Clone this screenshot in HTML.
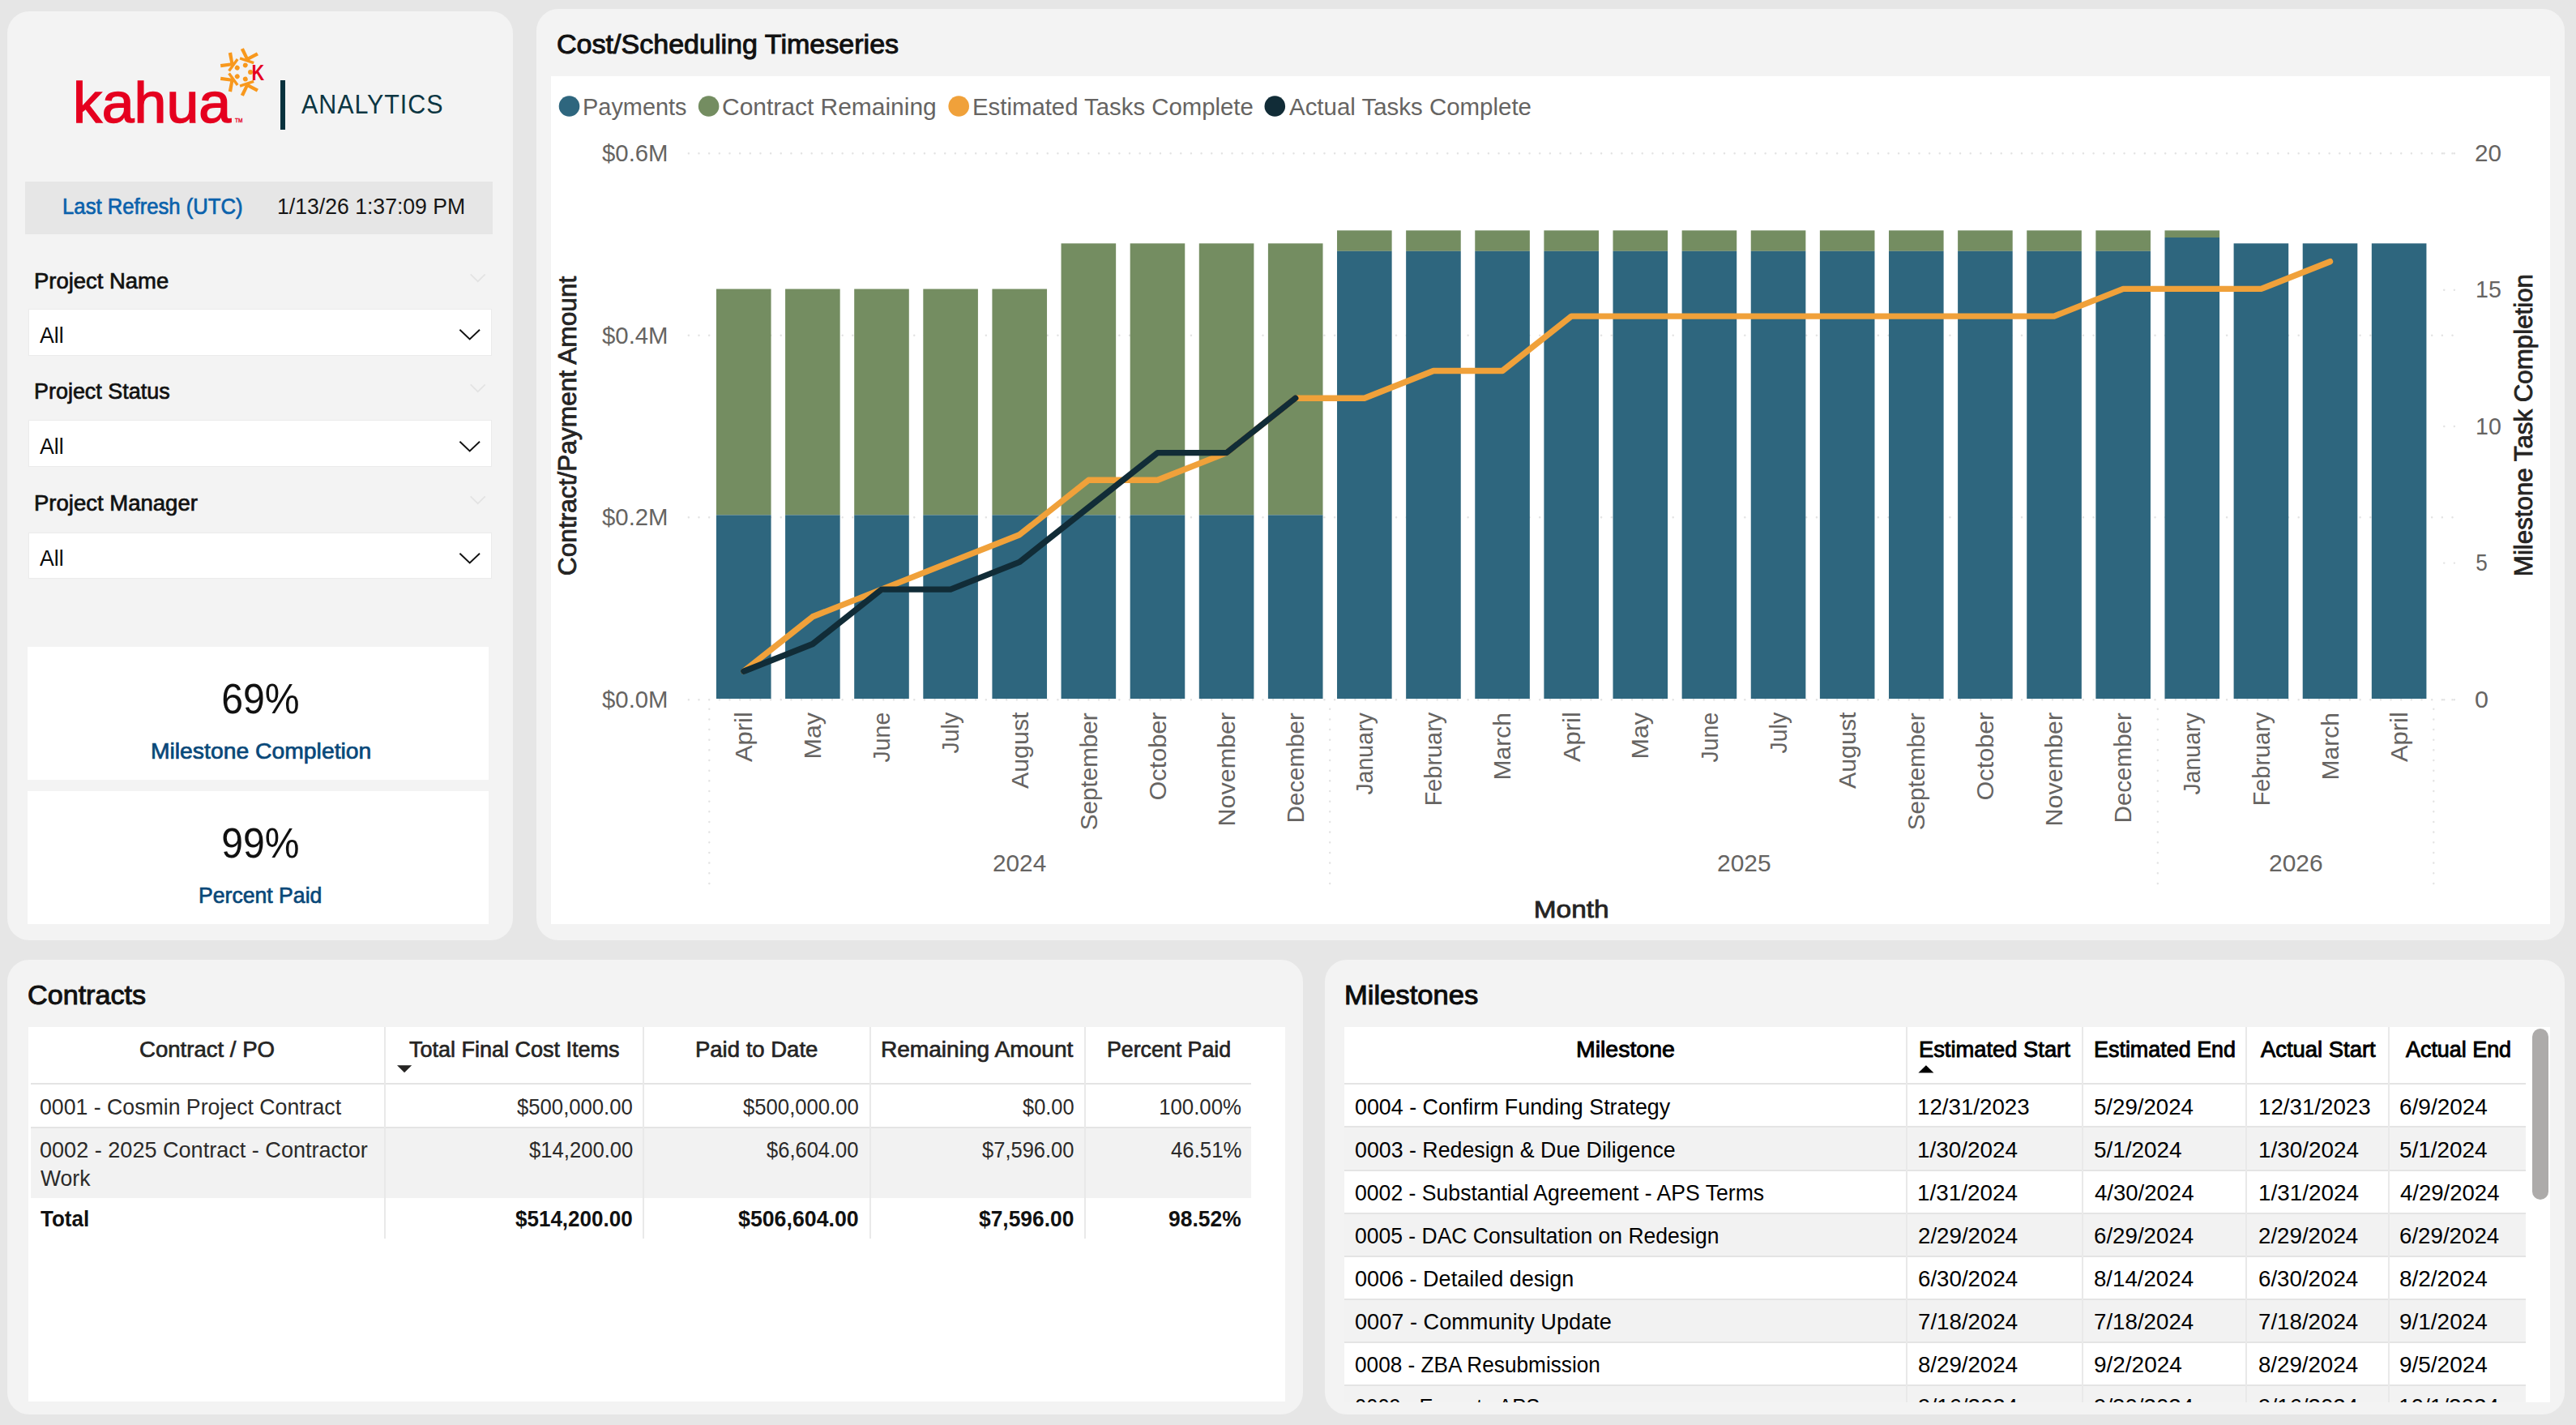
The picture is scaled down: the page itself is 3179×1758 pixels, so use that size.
<!DOCTYPE html>
<html lang="en"><head><meta charset="utf-8"><title>Kahua Analytics - Cost/Scheduling</title>
<style>
html,body{margin:0;padding:0}
body{width:3179px;height:1758px;background:#e6e6e6;position:relative;overflow:hidden;font-family:"Liberation Sans",sans-serif;}
body>div,body>svg,.t{position:absolute}
.t{white-space:pre;line-height:1;display:block}
.clip{position:absolute;overflow:hidden}
.clip>div,.clip>.t{position:absolute}
</style></head>
<body>
<div style="left:9px;top:13.5px;width:624px;height:1146.5px;background:#f3f3f3;border-radius:27px;"></div>
<div style="left:661.7px;top:10.5px;width:2503.3px;height:1149.5px;background:#f3f3f3;border-radius:27px;"></div>
<div style="left:9px;top:1184px;width:1598.5px;height:561px;background:#f3f3f3;border-radius:27px;"></div>
<div style="left:1635px;top:1184px;width:1529.6px;height:561px;background:#f3f3f3;border-radius:27px;"></div>
<div style="left:679.5px;top:94.3px;width:2467.9px;height:1045.4px;background:#fff;"></div>
<div style="left:34.6px;top:1267.3px;width:1551.9px;height:462.1px;background:#fff;"></div>
<div style="left:1658.8px;top:1267.3px;width:1488px;height:462.3px;background:#fff;"></div>
<div style="left:31px;top:223.7px;width:577px;height:65px;background:#e6e6e6;"></div>
<span class="t" style="left:76.74px;top:242.00px;font-size:27px;color:#0b62ac;-webkit-text-stroke:0.7px #0b62ac;transform-origin:1.86px 22.00px;transform:scaleX(0.9503);">Last Refresh (UTC)</span>
<span class="t" style="left:342.31px;top:241.00px;font-size:27.5px;color:#161616;transform-origin:2.09px 23.00px;transform:scaleX(0.9669);">1/13/26 1:37:09 PM</span>
<span class="t" style="left:42.04px;top:334.00px;font-size:27px;color:#111;-webkit-text-stroke:0.7px #111;transform-origin:1.86px 22.00px;transform:scaleX(1.0165);">Project Name</span>
<svg style="left:578px;top:334.6px" width="24" height="16" viewBox="0 0 24 16"><path d="M2.7 3.3 L11.7 12.2 L20.7 3.3" fill="none" stroke="#e3e3e3" stroke-width="1.7"/></svg>
<div style="left:34.8px;top:381.3px;width:572.7px;height:58px;background:#fff;box-sizing:border-box;border:1.8px solid #ebebeb;"></div>
<span class="t" style="left:49.15px;top:401.00px;font-size:27px;color:#0a0a0a;transform-origin:0.05px 22.00px;transform:scaleX(0.9873);">All</span>
<svg style="left:564px;top:403.4px" width="32" height="20" viewBox="0 0 32 20"><path d="M3.4 3.7 L15.7 15.5 L28 3.7" fill="none" stroke="#111" stroke-width="1.9"/></svg>
<span class="t" style="left:42.04px;top:470.00px;font-size:27px;color:#111;-webkit-text-stroke:0.7px #111;transform-origin:1.86px 22.00px;transform:scaleX(0.9971);">Project Status</span>
<svg style="left:578px;top:470.7px" width="24" height="16" viewBox="0 0 24 16"><path d="M2.7 3.3 L11.7 12.2 L20.7 3.3" fill="none" stroke="#e3e3e3" stroke-width="1.7"/></svg>
<div style="left:34.8px;top:518.4px;width:572.7px;height:57.4px;background:#fff;box-sizing:border-box;border:1.8px solid #ebebeb;"></div>
<span class="t" style="left:49.15px;top:538.00px;font-size:27px;color:#0a0a0a;transform-origin:0.05px 22.00px;transform:scaleX(0.9873);">All</span>
<svg style="left:564px;top:540.5px" width="32" height="20" viewBox="0 0 32 20"><path d="M3.4 3.7 L15.7 15.5 L28 3.7" fill="none" stroke="#111" stroke-width="1.9"/></svg>
<span class="t" style="left:42.04px;top:608.00px;font-size:27px;color:#111;-webkit-text-stroke:0.7px #111;transform-origin:1.86px 22.00px;transform:scaleX(1.0191);">Project Manager</span>
<svg style="left:578px;top:609.1px" width="24" height="16" viewBox="0 0 24 16"><path d="M2.7 3.3 L11.7 12.2 L20.7 3.3" fill="none" stroke="#e3e3e3" stroke-width="1.7"/></svg>
<div style="left:34.8px;top:656.6px;width:572.7px;height:57.1px;background:#fff;box-sizing:border-box;border:1.8px solid #ebebeb;"></div>
<span class="t" style="left:49.15px;top:676.00px;font-size:27px;color:#0a0a0a;transform-origin:0.05px 22.00px;transform:scaleX(0.9873);">All</span>
<svg style="left:564px;top:678.7px" width="32" height="20" viewBox="0 0 32 20"><path d="M3.4 3.7 L15.7 15.5 L28 3.7" fill="none" stroke="#111" stroke-width="1.9"/></svg>
<div style="left:34px;top:798.2px;width:569px;height:163.4px;background:#fff;"></div>
<div style="left:34px;top:976px;width:569px;height:163.8px;background:#fff;"></div>
<span class="t" style="left:273.08px;top:836.00px;font-size:52.5px;color:#111;transform-origin:2.67px 44.00px;transform:scaleX(0.9180);">69%</span>
<span class="t" style="left:185.54px;top:914.00px;font-size:27px;color:#084879;-webkit-text-stroke:0.7px #084879;transform-origin:1.86px 22.00px;transform:scaleX(1.0493);">Milestone Completion</span>
<span class="t" style="left:273.29px;top:1014.00px;font-size:52.5px;color:#111;transform-origin:2.46px 44.00px;transform:scaleX(0.9162);">99%</span>
<span class="t" style="left:245.29px;top:1092.00px;font-size:27px;color:#084879;-webkit-text-stroke:0.7px #084879;transform-origin:1.86px 22.00px;transform:scaleX(0.9852);">Percent Paid</span>
<span class="t" style="left:90.07px;top:93.00px;font-size:69.5px;color:#e5001f;-webkit-text-stroke:1.5px #e5001f;transform-origin:3.93px 58.00px;transform:scaleX(1.0312);">kahua</span>
<span class="t" style="left:290.20px;top:146.00px;font-size:6.8px;color:#e5001f;-webkit-text-stroke:0.3px #e5001f;transform-origin:0.00px 5.00px;transform:scaleX(0.9557);">TM</span>
<div style="left:345.9px;top:98.9px;width:5.7px;height:61.5px;background:#07313d;"></div>
<span class="t" style="left:372.44px;top:113.00px;font-size:32.5px;color:#0c3642;letter-spacing:1px;transform-origin:0.06px 27.00px;transform:scaleX(0.9369);">ANALYTICS</span>
<svg style="left:259.5px;top:49px" width="80" height="80" viewBox="-40 -40 80 80"><g fill="#f8981d"><circle cx="9" cy="0" r="2.95"/><g transform="rotate(-72)"><circle cx="9" cy="0" r="2.95"/><rect x="13.3" y="-9" width="3.4" height="18"/><path d="M15.6 -1.7 L25.6 -11.6 L28.6 -8.4 L19.6 0 L28.6 8.4 L25.6 11.6 L15.6 1.7Z"/></g><g transform="rotate(-144)"><circle cx="9" cy="0" r="2.95"/><rect x="13.3" y="-9" width="3.4" height="18"/><path d="M15.6 -1.7 L25.6 -11.6 L28.6 -8.4 L19.6 0 L28.6 8.4 L25.6 11.6 L15.6 1.7Z"/></g><g transform="rotate(144)"><circle cx="9" cy="0" r="2.95"/><rect x="13.3" y="-9" width="3.4" height="18"/><path d="M15.6 -1.7 L25.6 -11.6 L28.6 -8.4 L19.6 0 L28.6 8.4 L25.6 11.6 L15.6 1.7Z"/></g><g transform="rotate(72)"><circle cx="9" cy="0" r="2.95"/><rect x="13.3" y="-9" width="3.4" height="18"/><path d="M15.6 -1.7 L25.6 -11.6 L28.6 -8.4 L19.6 0 L28.6 8.4 L25.6 11.6 L15.6 1.7Z"/></g></g></svg>
<span class="t" style="left:310.47px;top:76.00px;font-size:27.3px;color:#e5001f;font-weight:700;transform-origin:1.83px 23.00px;transform:scaleX(0.7937);">K</span>
<svg style="left:0;top:0" width="3179" height="1170" viewBox="0 0 3179 1170"><g stroke="#e3e3e3" stroke-width="2.4" stroke-linecap="round" stroke-dasharray="0.1 12.555" fill="none"><line x1="849.8" y1="189.2" x2="3027.5" y2="189.2"/><line x1="849.8" y1="413.8" x2="3027.5" y2="413.8"/><line x1="849.8" y1="638.3" x2="3027.5" y2="638.3"/><line x1="849.8" y1="863.3" x2="3027.5" y2="863.3"/><line x1="3016.2" y1="189.2" x2="3030" y2="189.2"/><line x1="3016.2" y1="357.7" x2="3030" y2="357.7"/><line x1="3016.2" y1="526" x2="3030" y2="526"/><line x1="3016.2" y1="694.6" x2="3030" y2="694.6"/><line x1="3016.2" y1="863.3" x2="3030" y2="863.3"/><line x1="875.3" y1="874.7" x2="875.3" y2="1091"/><line x1="1641.2" y1="874.7" x2="1641.2" y2="1091"/><line x1="2662.8" y1="874.7" x2="2662.8" y2="1091"/><line x1="3003.3" y1="874.7" x2="3003.3" y2="1091"/></g><rect x="883.95" y="356.5" width="67.6" height="278.9" fill="#748d61"/><rect x="883.95" y="635.4" width="67.6" height="226.6" fill="#2e667e"/><rect x="969.07" y="356.5" width="67.6" height="278.9" fill="#748d61"/><rect x="969.07" y="635.4" width="67.6" height="226.6" fill="#2e667e"/><rect x="1054.19" y="356.5" width="67.6" height="278.9" fill="#748d61"/><rect x="1054.19" y="635.4" width="67.6" height="226.6" fill="#2e667e"/><rect x="1139.31" y="356.5" width="67.6" height="278.9" fill="#748d61"/><rect x="1139.31" y="635.4" width="67.6" height="226.6" fill="#2e667e"/><rect x="1224.43" y="356.5" width="67.6" height="278.9" fill="#748d61"/><rect x="1224.43" y="635.4" width="67.6" height="226.6" fill="#2e667e"/><rect x="1309.55" y="300.3" width="67.6" height="335.1" fill="#748d61"/><rect x="1309.55" y="635.4" width="67.6" height="226.6" fill="#2e667e"/><rect x="1394.67" y="300.3" width="67.6" height="335.1" fill="#748d61"/><rect x="1394.67" y="635.4" width="67.6" height="226.6" fill="#2e667e"/><rect x="1479.79" y="300.3" width="67.6" height="335.1" fill="#748d61"/><rect x="1479.79" y="635.4" width="67.6" height="226.6" fill="#2e667e"/><rect x="1564.91" y="300.3" width="67.6" height="335.1" fill="#748d61"/><rect x="1564.91" y="635.4" width="67.6" height="226.6" fill="#2e667e"/><rect x="1650.03" y="284.3" width="67.6" height="25.5" fill="#748d61"/><rect x="1650.03" y="309.8" width="67.6" height="552.2" fill="#2e667e"/><rect x="1735.15" y="284.3" width="67.6" height="25.5" fill="#748d61"/><rect x="1735.15" y="309.8" width="67.6" height="552.2" fill="#2e667e"/><rect x="1820.27" y="284.3" width="67.6" height="25.5" fill="#748d61"/><rect x="1820.27" y="309.8" width="67.6" height="552.2" fill="#2e667e"/><rect x="1905.39" y="284.3" width="67.6" height="25.5" fill="#748d61"/><rect x="1905.39" y="309.8" width="67.6" height="552.2" fill="#2e667e"/><rect x="1990.51" y="284.3" width="67.6" height="25.5" fill="#748d61"/><rect x="1990.51" y="309.8" width="67.6" height="552.2" fill="#2e667e"/><rect x="2075.63" y="284.3" width="67.6" height="25.5" fill="#748d61"/><rect x="2075.63" y="309.8" width="67.6" height="552.2" fill="#2e667e"/><rect x="2160.75" y="284.3" width="67.6" height="25.5" fill="#748d61"/><rect x="2160.75" y="309.8" width="67.6" height="552.2" fill="#2e667e"/><rect x="2245.87" y="284.3" width="67.6" height="25.5" fill="#748d61"/><rect x="2245.87" y="309.8" width="67.6" height="552.2" fill="#2e667e"/><rect x="2330.99" y="284.3" width="67.6" height="25.5" fill="#748d61"/><rect x="2330.99" y="309.8" width="67.6" height="552.2" fill="#2e667e"/><rect x="2416.11" y="284.3" width="67.6" height="25.5" fill="#748d61"/><rect x="2416.11" y="309.8" width="67.6" height="552.2" fill="#2e667e"/><rect x="2501.23" y="284.3" width="67.6" height="25.5" fill="#748d61"/><rect x="2501.23" y="309.8" width="67.6" height="552.2" fill="#2e667e"/><rect x="2586.35" y="284.3" width="67.6" height="25.5" fill="#748d61"/><rect x="2586.35" y="309.8" width="67.6" height="552.2" fill="#2e667e"/><rect x="2671.47" y="284.3" width="67.6" height="8.7" fill="#748d61"/><rect x="2671.47" y="293" width="67.6" height="569" fill="#2e667e"/><rect x="2756.59" y="300.3" width="67.6" height="561.7" fill="#2e667e"/><rect x="2841.71" y="300.3" width="67.6" height="561.7" fill="#2e667e"/><rect x="2926.83" y="300.3" width="67.6" height="561.7" fill="#2e667e"/><polyline points="917.8,828.2 1002.9,760.8 1088.0,727.1 1173.1,693.4 1258.2,659.7 1343.3,592.3 1428.5,592.3 1513.6,558.6 1598.7,491.2 1683.8,491.2 1769.0,457.5 1854.1,457.5 1939.2,390.1 2024.3,390.1 2109.4,390.1 2194.6,390.1 2279.7,390.1 2364.8,390.1 2449.9,390.1 2535.0,390.1 2620.2,356.4 2705.3,356.4 2790.4,356.4 2875.5,322.7" fill="none" stroke="#f0a13a" stroke-width="7.4" stroke-linecap="round" stroke-linejoin="round"/><polyline points="917.8,828.2 1002.9,794.5 1088.0,727.1 1173.1,727.1 1258.2,693.4 1343.3,626.0 1428.5,558.6 1513.6,558.6 1598.7,491.2" fill="none" stroke="#112c37" stroke-width="7.4" stroke-linecap="round" stroke-linejoin="round"/><circle cx="702.5" cy="131" r="12.8" fill="#2e667e"/><circle cx="874.6" cy="131" r="12.8" fill="#748d61"/><circle cx="1183.2" cy="131" r="12.8" fill="#f0a13a"/><circle cx="1573.3" cy="131" r="12.8" fill="#112c37"/></svg>
<span class="t" style="left:686.98px;top:38.00px;font-size:33.8px;color:#111;-webkit-text-stroke:1px #111;transform-origin:1.22px 28.00px;transform:scaleX(1.0077);">Cost/Scheduling Timeseries</span>
<span class="t" style="left:718.86px;top:117.00px;font-size:29.8px;color:#666462;transform-origin:2.44px 25.00px;transform:scaleX(0.9692);">Payments</span>
<span class="t" style="left:891.39px;top:117.00px;font-size:29.8px;color:#666462;transform-origin:1.51px 25.00px;transform:scaleX(1.0054);">Contract Remaining</span>
<span class="t" style="left:1200.06px;top:117.00px;font-size:29.8px;color:#666462;transform-origin:2.44px 25.00px;transform:scaleX(0.9847);">Estimated Tasks Complete</span>
<span class="t" style="left:1591.34px;top:117.00px;font-size:29.8px;color:#666462;transform-origin:0.06px 25.00px;transform:scaleX(0.9882);">Actual Tasks Complete</span>
<span class="t" style="left:743.18px;top:174.00px;font-size:30px;color:#666462;transform-origin:0.32px 25.00px;transform:scaleX(0.9776);">$0.6M</span>
<span class="t" style="left:743.18px;top:399.00px;font-size:30px;color:#666462;transform-origin:0.32px 25.00px;transform:scaleX(0.9776);">$0.4M</span>
<span class="t" style="left:743.18px;top:623.00px;font-size:30px;color:#666462;transform-origin:0.32px 25.00px;transform:scaleX(0.9776);">$0.2M</span>
<span class="t" style="left:743.18px;top:848.00px;font-size:30px;color:#666462;transform-origin:0.32px 25.00px;transform:scaleX(0.9776);">$0.0M</span>
<span class="t" style="left:3054.19px;top:174.00px;font-size:30px;color:#666462;transform-origin:1.51px 25.00px;transform:scaleX(0.9904);">20</span>
<span class="t" style="left:3054.71px;top:342.00px;font-size:30px;color:#666462;transform-origin:2.29px 25.00px;transform:scaleX(0.9554);">15</span>
<span class="t" style="left:3054.81px;top:511.00px;font-size:30px;color:#666462;transform-origin:2.29px 25.00px;transform:scaleX(0.9526);">10</span>
<span class="t" style="left:3055.10px;top:679.00px;font-size:30px;color:#666462;transform-origin:1.20px 25.00px;transform:scaleX(0.8716);">5</span>
<span class="t" style="left:3054.23px;top:848.00px;font-size:30px;color:#666462;transform-origin:1.17px 25.00px;transform:scaleX(1.0179);">0</span>
<span class="t" style="left:928.29px;top:915.40px;font-size:30.2px;color:#666462;transform-origin:0.06px 25.00px;transform:rotate(-90deg) scaleX(1.0255);">April</span>
<span class="t" style="left:1010.99px;top:908.80px;font-size:30.2px;color:#666462;transform-origin:2.48px 25.00px;transform:rotate(-90deg) scaleX(1.0093);">May</span>
<span class="t" style="left:1098.12px;top:914.60px;font-size:30.2px;color:#666462;transform-origin:0.47px 25.00px;transform:rotate(-90deg) scaleX(0.9426);">June</span>
<span class="t" style="left:1183.24px;top:903.90px;font-size:30.2px;color:#666462;transform-origin:0.47px 25.00px;transform:rotate(-90deg) scaleX(0.9425);">July</span>
<span class="t" style="left:1268.77px;top:948.10px;font-size:30.2px;color:#666462;transform-origin:0.06px 25.00px;transform:rotate(-90deg) scaleX(1.0064);">August</span>
<span class="t" style="left:1352.58px;top:997.60px;font-size:30.2px;color:#666462;transform-origin:1.37px 25.00px;transform:rotate(-90deg) scaleX(0.9822);">September</span>
<span class="t" style="left:1437.64px;top:961.30px;font-size:30.2px;color:#666462;transform-origin:1.43px 25.00px;transform:rotate(-90deg) scaleX(1.0137);">October</span>
<span class="t" style="left:1521.71px;top:992.00px;font-size:30.2px;color:#666462;transform-origin:2.48px 25.00px;transform:rotate(-90deg) scaleX(1.0098);">November</span>
<span class="t" style="left:1606.83px;top:987.80px;font-size:30.2px;color:#666462;transform-origin:2.48px 25.00px;transform:rotate(-90deg) scaleX(0.9789);">December</span>
<span class="t" style="left:1693.96px;top:954.50px;font-size:30.2px;color:#666462;transform-origin:0.47px 25.00px;transform:rotate(-90deg) scaleX(0.9413);">January</span>
<span class="t" style="left:1777.07px;top:967.10px;font-size:30.2px;color:#666462;transform-origin:2.48px 25.00px;transform:rotate(-90deg) scaleX(0.9572);">February</span>
<span class="t" style="left:1862.19px;top:934.80px;font-size:30.2px;color:#666462;transform-origin:2.48px 25.00px;transform:rotate(-90deg) scaleX(0.9945);">March</span>
<span class="t" style="left:1949.73px;top:915.40px;font-size:30.2px;color:#666462;transform-origin:0.06px 25.00px;transform:rotate(-90deg) scaleX(1.0255);">April</span>
<span class="t" style="left:2032.43px;top:908.80px;font-size:30.2px;color:#666462;transform-origin:2.48px 25.00px;transform:rotate(-90deg) scaleX(1.0093);">May</span>
<span class="t" style="left:2119.56px;top:914.60px;font-size:30.2px;color:#666462;transform-origin:0.47px 25.00px;transform:rotate(-90deg) scaleX(0.9426);">June</span>
<span class="t" style="left:2204.68px;top:903.90px;font-size:30.2px;color:#666462;transform-origin:0.47px 25.00px;transform:rotate(-90deg) scaleX(0.9425);">July</span>
<span class="t" style="left:2290.21px;top:948.10px;font-size:30.2px;color:#666462;transform-origin:0.06px 25.00px;transform:rotate(-90deg) scaleX(1.0064);">August</span>
<span class="t" style="left:2374.02px;top:997.60px;font-size:30.2px;color:#666462;transform-origin:1.37px 25.00px;transform:rotate(-90deg) scaleX(0.9822);">September</span>
<span class="t" style="left:2459.08px;top:961.30px;font-size:30.2px;color:#666462;transform-origin:1.43px 25.00px;transform:rotate(-90deg) scaleX(1.0137);">October</span>
<span class="t" style="left:2543.15px;top:992.00px;font-size:30.2px;color:#666462;transform-origin:2.48px 25.00px;transform:rotate(-90deg) scaleX(1.0098);">November</span>
<span class="t" style="left:2628.27px;top:987.80px;font-size:30.2px;color:#666462;transform-origin:2.48px 25.00px;transform:rotate(-90deg) scaleX(0.9789);">December</span>
<span class="t" style="left:2715.40px;top:954.50px;font-size:30.2px;color:#666462;transform-origin:0.47px 25.00px;transform:rotate(-90deg) scaleX(0.9413);">January</span>
<span class="t" style="left:2798.51px;top:967.10px;font-size:30.2px;color:#666462;transform-origin:2.48px 25.00px;transform:rotate(-90deg) scaleX(0.9572);">February</span>
<span class="t" style="left:2883.63px;top:934.80px;font-size:30.2px;color:#666462;transform-origin:2.48px 25.00px;transform:rotate(-90deg) scaleX(0.9945);">March</span>
<span class="t" style="left:2971.17px;top:915.40px;font-size:30.2px;color:#666462;transform-origin:0.06px 25.00px;transform:rotate(-90deg) scaleX(1.0255);">April</span>
<span class="t" style="left:1225.09px;top:1050.00px;font-size:30px;color:#666462;transform-origin:1.51px 25.00px;transform:scaleX(0.9913);">2024</span>
<span class="t" style="left:2118.59px;top:1050.00px;font-size:30px;color:#666462;transform-origin:1.51px 25.00px;transform:scaleX(0.9972);">2025</span>
<span class="t" style="left:2799.59px;top:1050.00px;font-size:30px;color:#666462;transform-origin:1.51px 25.00px;transform:scaleX(0.9981);">2026</span>
<span class="t" style="left:1893.28px;top:1107.00px;font-size:29.5px;color:#252423;-webkit-text-stroke:0.8px #252423;transform-origin:2.02px 25.00px;transform:scaleX(1.1330);">Month</span>
<span class="t" style="left:710.05px;top:682.50px;font-size:30.5px;color:#252423;-webkit-text-stroke:0.8px #252423;transform-origin:1.15px 26.00px;transform:rotate(-90deg) scaleX(1.0379);">Contract/Payment Amount</span>
<span class="t" style="left:3122.70px;top:683.40px;font-size:30.5px;color:#252423;-webkit-text-stroke:0.8px #252423;transform-origin:2.10px 26.00px;transform:rotate(-90deg) scaleX(1.0252);">Milestone Task Completion</span>
<span class="t" style="left:34.20px;top:1211.00px;font-size:33.5px;color:#111;-webkit-text-stroke:1px #111;transform-origin:1.20px 28.00px;transform:scaleX(1.0195);">Contracts</span>
<span class="t" style="left:172.26px;top:1282.00px;font-size:26.8px;color:#252423;-webkit-text-stroke:0.65px #252423;transform-origin:1.04px 22.00px;transform:scaleX(1.0291);">Contract / PO</span>
<span class="t" style="left:505.32px;top:1282.00px;font-size:26.8px;color:#252423;-webkit-text-stroke:0.65px #252423;transform-origin:0.28px 22.00px;transform:scaleX(1.0077);">Total Final Cost Items</span>
<span class="t" style="left:857.73px;top:1282.00px;font-size:26.8px;color:#252423;-webkit-text-stroke:0.65px #252423;transform-origin:1.87px 22.00px;transform:scaleX(1.0266);">Paid to Date</span>
<span class="t" style="left:1086.63px;top:1282.00px;font-size:26.8px;color:#252423;-webkit-text-stroke:0.65px #252423;transform-origin:1.87px 22.00px;transform:scaleX(1.0486);">Remaining Amount</span>
<span class="t" style="left:1365.53px;top:1282.00px;font-size:26.8px;color:#252423;-webkit-text-stroke:0.65px #252423;transform-origin:1.87px 22.00px;transform:scaleX(0.9976);">Percent Paid</span>
<svg style="left:488px;top:1312px" width="24" height="14" viewBox="0 0 24 14"><path d="M2 2.2 L20.2 2.2 L11.1 11.2Z" fill="#252423"/></svg>
<div style="left:38px;top:1391.5px;width:1506px;height:86px;background:#f2f2f2;"></div>
<div style="left:38px;top:1336px;width:1506px;height:2px;background:#e4e4e4;"></div>
<div style="left:38px;top:1389.6px;width:1506px;height:2px;background:#e4e4e4;"></div>
<div style="left:473.8px;top:1267.3px;width:2px;height:261px;background:#e9e9e9;"></div>
<div style="left:792.6px;top:1267.3px;width:2px;height:261px;background:#e9e9e9;"></div>
<div style="left:1073px;top:1267.3px;width:2px;height:261px;background:#e9e9e9;"></div>
<div style="left:1338px;top:1267.3px;width:2px;height:261px;background:#e9e9e9;"></div>
<span class="t" style="left:48.93px;top:1352.00px;font-size:27.5px;color:#2b2a29;transform-origin:1.07px 23.00px;transform:scaleX(0.9698);">0001 - Cosmin Project Contract</span>
<span class="t" style="left:638.20px;top:1352.00px;font-size:27.5px;color:#2b2a29;transform-origin:0.30px 23.00px;transform:scaleX(0.9336);">$500,000.00</span>
<span class="t" style="left:917.00px;top:1352.00px;font-size:27.5px;color:#2b2a29;transform-origin:0.30px 23.00px;transform:scaleX(0.9336);">$500,000.00</span>
<span class="t" style="left:1261.90px;top:1352.00px;font-size:27.5px;color:#2b2a29;transform-origin:0.30px 23.00px;transform:scaleX(0.9235);">$0.00</span>
<span class="t" style="left:1430.11px;top:1352.00px;font-size:27.5px;color:#2b2a29;transform-origin:2.09px 23.00px;transform:scaleX(0.9384);">100.00%</span>
<span class="t" style="left:48.93px;top:1405.00px;font-size:27.5px;color:#2b2a29;transform-origin:1.07px 23.00px;transform:scaleX(0.9842);">0002 - 2025 Contract - Contractor</span>
<span class="t" style="left:652.70px;top:1405.00px;font-size:27.5px;color:#2b2a29;transform-origin:0.30px 23.00px;transform:scaleX(0.9320);">$14,200.00</span>
<span class="t" style="left:946.30px;top:1405.00px;font-size:27.5px;color:#2b2a29;transform-origin:0.30px 23.00px;transform:scaleX(0.9275);">$6,604.00</span>
<span class="t" style="left:1212.00px;top:1405.00px;font-size:27.5px;color:#2b2a29;transform-origin:0.30px 23.00px;transform:scaleX(0.9275);">$7,596.00</span>
<span class="t" style="left:1444.77px;top:1405.00px;font-size:27.5px;color:#2b2a29;transform-origin:0.63px 23.00px;transform:scaleX(0.9360);">46.51%</span>
<span class="t" style="left:49.88px;top:1440.00px;font-size:27.5px;color:#2b2a29;transform-origin:0.12px 23.00px;transform:scaleX(0.9655);">Work</span>
<span class="t" style="left:49.69px;top:1490.00px;font-size:27.5px;color:#111;font-weight:700;transform-origin:0.31px 23.00px;transform:scaleX(0.9462);">Total</span>
<span class="t" style="left:636.44px;top:1490.00px;font-size:27.5px;color:#111;font-weight:700;transform-origin:0.36px 23.00px;transform:scaleX(0.9455);">$514,200.00</span>
<span class="t" style="left:911.24px;top:1490.00px;font-size:27.5px;color:#111;font-weight:700;transform-origin:0.36px 23.00px;transform:scaleX(0.9720);">$506,604.00</span>
<span class="t" style="left:1208.24px;top:1490.00px;font-size:27.5px;color:#111;font-weight:700;transform-origin:0.36px 23.00px;transform:scaleX(0.9590);">$7,596.00</span>
<span class="t" style="left:1442.25px;top:1490.00px;font-size:27.5px;color:#111;font-weight:700;transform-origin:0.95px 23.00px;transform:scaleX(0.9607);">98.52%</span>
<span class="t" style="left:1658.85px;top:1211.00px;font-size:33.5px;color:#0c0c0c;-webkit-text-stroke:1px #0c0c0c;transform-origin:2.25px 28.00px;transform:scaleX(1.0327);">Milestones</span>
<span class="t" style="left:1944.55px;top:1282.00px;font-size:26.8px;color:#000;-webkit-text-stroke:0.9px #000;transform-origin:1.75px 22.00px;transform:scaleX(1.0642);">Milestone</span>
<span class="t" style="left:2367.95px;top:1282.00px;font-size:26.8px;color:#000;-webkit-text-stroke:0.9px #000;transform-origin:1.75px 22.00px;transform:scaleX(1.0199);">Estimated Start</span>
<span class="t" style="left:2584.25px;top:1282.00px;font-size:26.8px;color:#000;-webkit-text-stroke:0.9px #000;transform-origin:1.75px 22.00px;transform:scaleX(1.0043);">Estimated End</span>
<span class="t" style="left:2790.20px;top:1282.00px;font-size:26.8px;color:#000;-webkit-text-stroke:0.9px #000;transform-origin:-0.40px 22.00px;transform:scaleX(1.0232);">Actual Start</span>
<span class="t" style="left:2968.50px;top:1282.00px;font-size:26.8px;color:#000;-webkit-text-stroke:0.9px #000;transform-origin:-0.40px 22.00px;transform:scaleX(1.0037);">Actual End</span>
<svg style="left:2365px;top:1312px" width="24" height="14" viewBox="0 0 24 14"><path d="M2.4 11.6 L21.4 11.6 L11.9 2.3Z" fill="#000"/></svg>
<div class="clip" style="left:1658.8px;top:1267.3px;width:1488px;height:462.3px"><span class="t" style="left:12.73px;top:85.00px;font-size:27.5px;color:#000;transform-origin:1.07px 23.00px;transform:scaleX(0.9753);">0004 - Confirm Funding Strategy</span>
<span class="t" style="left:707.11px;top:85.00px;font-size:27.5px;color:#000;transform-origin:2.09px 23.00px;transform:scaleX(1.0079);">12/31/2023</span>
<span class="t" style="left:925.60px;top:85.00px;font-size:27.5px;color:#000;transform-origin:1.10px 23.00px;transform:scaleX(1.0047);">5/29/2024</span>
<span class="t" style="left:1127.71px;top:85.00px;font-size:27.5px;color:#000;transform-origin:2.09px 23.00px;transform:scaleX(1.0079);">12/31/2023</span>
<span class="t" style="left:1302.10px;top:85.00px;font-size:27.5px;color:#000;transform-origin:1.40px 23.00px;transform:scaleX(1.0177);">6/9/2024</span>
<div style="left:0px;top:124.17px;width:1457.9px;height:52.07px;background:#f2f2f2;"></div>
<span class="t" style="left:12.73px;top:138.00px;font-size:27.5px;color:#000;transform-origin:1.07px 23.00px;transform:scaleX(0.9729);">0003 - Redesign &amp; Due Diligence</span>
<span class="t" style="left:707.11px;top:138.00px;font-size:27.5px;color:#000;transform-origin:2.09px 23.00px;transform:scaleX(1.0130);">1/30/2024</span>
<span class="t" style="left:925.60px;top:138.00px;font-size:27.5px;color:#000;transform-origin:1.10px 23.00px;transform:scaleX(1.0148);">5/1/2024</span>
<span class="t" style="left:1127.71px;top:138.00px;font-size:27.5px;color:#000;transform-origin:2.09px 23.00px;transform:scaleX(1.0130);">1/30/2024</span>
<span class="t" style="left:1302.40px;top:138.00px;font-size:27.5px;color:#000;transform-origin:1.10px 23.00px;transform:scaleX(1.0148);">5/1/2024</span>
<span class="t" style="left:12.73px;top:191.00px;font-size:27.5px;color:#000;transform-origin:1.07px 23.00px;transform:scaleX(0.9671);">0002 - Substantial Agreement - APS Terms</span>
<span class="t" style="left:707.11px;top:191.00px;font-size:27.5px;color:#000;transform-origin:2.09px 23.00px;transform:scaleX(1.0130);">1/31/2024</span>
<span class="t" style="left:926.07px;top:191.00px;font-size:27.5px;color:#000;transform-origin:0.63px 23.00px;transform:scaleX(1.0008);">4/30/2024</span>
<span class="t" style="left:1127.71px;top:191.00px;font-size:27.5px;color:#000;transform-origin:2.09px 23.00px;transform:scaleX(1.0130);">1/31/2024</span>
<span class="t" style="left:1302.87px;top:191.00px;font-size:27.5px;color:#000;transform-origin:0.63px 23.00px;transform:scaleX(1.0008);">4/29/2024</span>
<div style="left:0px;top:230.31px;width:1457.9px;height:52.07px;background:#f2f2f2;"></div>
<span class="t" style="left:12.73px;top:244.00px;font-size:27.5px;color:#000;transform-origin:1.07px 23.00px;transform:scaleX(0.9637);">0005 - DAC Consultation on Redesign</span>
<span class="t" style="left:707.82px;top:244.00px;font-size:27.5px;color:#000;transform-origin:1.38px 23.00px;transform:scaleX(1.0070);">2/29/2024</span>
<span class="t" style="left:925.30px;top:244.00px;font-size:27.5px;color:#000;transform-origin:1.40px 23.00px;transform:scaleX(1.0071);">6/29/2024</span>
<span class="t" style="left:1128.42px;top:244.00px;font-size:27.5px;color:#000;transform-origin:1.38px 23.00px;transform:scaleX(1.0070);">2/29/2024</span>
<span class="t" style="left:1302.10px;top:244.00px;font-size:27.5px;color:#000;transform-origin:1.40px 23.00px;transform:scaleX(1.0071);">6/29/2024</span>
<span class="t" style="left:12.73px;top:297.00px;font-size:27.5px;color:#000;transform-origin:1.07px 23.00px;transform:scaleX(0.9822);">0006 - Detailed design</span>
<span class="t" style="left:707.80px;top:297.00px;font-size:27.5px;color:#000;transform-origin:1.40px 23.00px;transform:scaleX(1.0071);">6/30/2024</span>
<span class="t" style="left:925.50px;top:297.00px;font-size:27.5px;color:#000;transform-origin:1.20px 23.00px;transform:scaleX(1.0055);">8/14/2024</span>
<span class="t" style="left:1128.40px;top:297.00px;font-size:27.5px;color:#000;transform-origin:1.40px 23.00px;transform:scaleX(1.0071);">6/30/2024</span>
<span class="t" style="left:1302.30px;top:297.00px;font-size:27.5px;color:#000;transform-origin:1.20px 23.00px;transform:scaleX(1.0157);">8/2/2024</span>
<div style="left:0px;top:336.45px;width:1457.9px;height:52.07px;background:#f2f2f2;"></div>
<span class="t" style="left:12.73px;top:350.00px;font-size:27.5px;color:#000;transform-origin:1.07px 23.00px;transform:scaleX(0.9871);">0007 - Community Update</span>
<span class="t" style="left:707.79px;top:350.00px;font-size:27.5px;color:#000;transform-origin:1.41px 23.00px;transform:scaleX(1.0073);">7/18/2024</span>
<span class="t" style="left:925.29px;top:350.00px;font-size:27.5px;color:#000;transform-origin:1.41px 23.00px;transform:scaleX(1.0073);">7/18/2024</span>
<span class="t" style="left:1128.39px;top:350.00px;font-size:27.5px;color:#000;transform-origin:1.41px 23.00px;transform:scaleX(1.0073);">7/18/2024</span>
<span class="t" style="left:1302.21px;top:350.00px;font-size:27.5px;color:#000;transform-origin:1.29px 23.00px;transform:scaleX(1.0167);">9/1/2024</span>
<span class="t" style="left:12.73px;top:403.00px;font-size:27.5px;color:#000;transform-origin:1.07px 23.00px;transform:scaleX(0.9525);">0008 - ZBA Resubmission</span>
<span class="t" style="left:708.00px;top:403.00px;font-size:27.5px;color:#000;transform-origin:1.20px 23.00px;transform:scaleX(1.0055);">8/29/2024</span>
<span class="t" style="left:925.41px;top:403.00px;font-size:27.5px;color:#000;transform-origin:1.29px 23.00px;transform:scaleX(1.0167);">9/2/2024</span>
<span class="t" style="left:1128.60px;top:403.00px;font-size:27.5px;color:#000;transform-origin:1.20px 23.00px;transform:scaleX(1.0055);">8/29/2024</span>
<span class="t" style="left:1302.21px;top:403.00px;font-size:27.5px;color:#000;transform-origin:1.29px 23.00px;transform:scaleX(1.0167);">9/5/2024</span>
<div style="left:0px;top:442.59px;width:1457.9px;height:52.07px;background:#f2f2f2;"></div>
<span class="t" style="left:12.73px;top:455.00px;font-size:27.5px;color:#000;transform-origin:1.07px 23.00px;transform:scaleX(0.9270);">0009 - Execute APS</span>
<span class="t" style="left:707.91px;top:455.00px;font-size:27.5px;color:#000;transform-origin:1.29px 23.00px;transform:scaleX(1.0062);">9/16/2024</span>
<span class="t" style="left:925.41px;top:455.00px;font-size:27.5px;color:#000;transform-origin:1.29px 23.00px;transform:scaleX(1.0062);">9/30/2024</span>
<span class="t" style="left:1128.51px;top:455.00px;font-size:27.5px;color:#000;transform-origin:1.29px 23.00px;transform:scaleX(1.0062);">9/16/2024</span>
<span class="t" style="left:1301.41px;top:455.00px;font-size:27.5px;color:#000;transform-origin:2.09px 23.00px;transform:scaleX(1.0130);">10/1/2024</span>
<div style="left:0px;top:69.1px;width:1457.9px;height:2px;background:#e4e4e4;"></div>
<div style="left:0px;top:122.17px;width:1457.9px;height:2px;background:#e4e4e4;"></div>
<div style="left:0px;top:175.24px;width:1457.9px;height:2px;background:#e4e4e4;"></div>
<div style="left:0px;top:228.31px;width:1457.9px;height:2px;background:#e4e4e4;"></div>
<div style="left:0px;top:281.38px;width:1457.9px;height:2px;background:#e4e4e4;"></div>
<div style="left:0px;top:334.45px;width:1457.9px;height:2px;background:#e4e4e4;"></div>
<div style="left:0px;top:387.52px;width:1457.9px;height:2px;background:#e4e4e4;"></div>
<div style="left:0px;top:440.59px;width:1457.9px;height:2px;background:#e4e4e4;"></div>
<div style="left:0px;top:493.66px;width:1457.9px;height:2px;background:#e4e4e4;"></div>
<div style="left:693.2px;top:0px;width:2px;height:470px;background:#e9e9e9;"></div>
<div style="left:910.2px;top:0px;width:2px;height:470px;background:#e9e9e9;"></div>
<div style="left:1112.7px;top:0px;width:2px;height:470px;background:#e9e9e9;"></div>
<div style="left:1288.2px;top:0px;width:2px;height:470px;background:#e9e9e9;"></div></div>
<div style="left:3125.1px;top:1268.8px;width:19.9px;height:211.3px;background:#adabaa;border-radius:10px;"></div>
</body></html>
